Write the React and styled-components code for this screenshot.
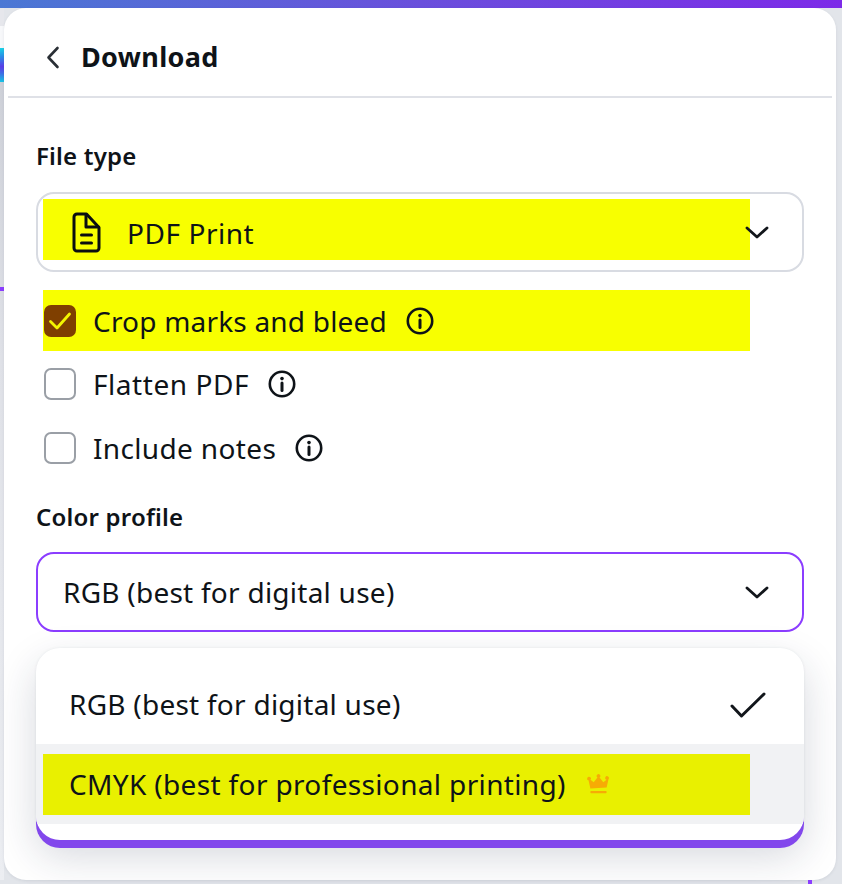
import React from "react";
import styled, { createGlobalStyle } from "styled-components";

const Global = createGlobalStyle`
  html, body { margin: 0; padding: 0; }
  body { background: #e2e5ea; font-family: "Noto Sans", "Open Sans", sans-serif; color: #0e1318; }
`;

const Page = styled.div`
  width: 842px;
  height: 884px;
  overflow: hidden;
  display: flex;
  flex-direction: column;
`;
const TopBar = styled.div`
  height: 8px;
  flex: none;
  background: linear-gradient(90deg, #4a78d4 0%, #6a4fdc 50%, #7d2ae8 100%);
`;
const Middle = styled.div`
  display: flex;
  height: 872px;
  flex: none;
`;
const Gutter = styled.div`
  width: 4px;
  flex: none;
  display: flex;
  flex-direction: column;
  background: linear-gradient(180deg, #c9ccd4 0%, #dfe1e7 40%, #eceef2 100%);
`;
const Sliver = styled.div`
  height: ${(p) => p.$h}px;
  background: ${(p) => p.$bg};
  flex: none;
`;
const Panel = styled.section`
  width: 832px;
  flex: none;
  background: #fff;
  border-radius: 22px;
  box-sizing: border-box;
  padding: 0 4px;
  box-shadow: 0 1px 3px rgba(60, 66, 87, 0.1);
`;
const Bottom = styled.div`
  height: 4px;
  flex: none;
  display: flex;
  justify-content: flex-end;
  padding-right: 30px;
`;
const Tick = styled.div`
  width: 4px;
  background: #8b3dff;
`;
const Header = styled.header`
  height: 90px;
  box-sizing: border-box;
  display: flex;
  align-items: center;
  padding: 10px 0 0 38px;
  gap: 21px;
  border-bottom: 2px solid #dfe1e7;
`;
const Title = styled.h1`
  margin: 0;
  font-size: 27px;
  line-height: 36px;
  font-weight: 700;
  letter-spacing: 0.35px;
`;
const Body = styled.div`
  padding: 0 28px;
`;
const Label = styled.div`
  font-size: 24px;
  line-height: 30px;
  font-weight: 600;
  letter-spacing: 0.2px;
  margin-top: ${(p) => p.$top}px;
  margin-bottom: ${(p) => p.$bottom}px;
`;
const SelectBox = styled.div`
  width: 768px;
  height: 80px;
  box-sizing: border-box;
  border: 2px solid ${(p) => (p.$active ? "#8b3dff" : "#d8dbe2")};
  border-radius: 18px;
  display: flex;
  align-items: center;
  padding: ${(p) => (p.$active ? "0 33px 0 25px" : "0 0 5px 5px")};
`;
const Highlight = styled.div`
  width: 707px;
  height: 61px;
  flex: none;
  box-sizing: border-box;
  display: flex;
  align-items: center;
  background: ${(p) => p.$bg || "#f8ff00"};
`;
const SelectValue = styled.span`
  font-size: 28px;
  line-height: 36px;
  letter-spacing: ${(p) => p.$spacing ?? 0.2}px;
  margin-top: ${(p) => p.$top || 0}px;
  flex: 1;
`;
const DocSlot = styled.span`
  display: flex;
  margin: 5px 26px 0 29px;
`;
const Chevron = styled.svg`
  width: 24px;
  height: 15px;
  flex: none;
  margin-left: ${(p) => p.$left}px;
  margin-top: ${(p) => p.$top}px;
`;
const CheckList = styled.div`
  margin: 18px 0 0;
  display: flex;
  flex-direction: column;
`;
const CheckRow = styled.div`
  height: 64px;
  margin-left: 7px;
  display: flex;
  align-items: center;
  &:first-child { height: 61px; margin-bottom: 1px; }
`;
const Box = styled.span`
  width: 32px;
  height: 32px;
  flex: none;
  box-sizing: border-box;
  border-radius: 7px;
  border: ${(p) => (p.$on ? "none" : "2px solid #9a9fa6")};
  background: ${(p) => (p.$on ? "#7f3f00" : "#fff")};
  display: flex;
  align-items: center;
  justify-content: center;
  margin-left: 1px;
`;
const CheckText = styled.span`
  font-size: 28px;
  line-height: 36px;
  letter-spacing: ${(p) => p.$spacing}px;
  margin-left: 17px;
`;
const Info = styled.svg`
  width: 28px;
  height: 28px;
  flex: none;
  margin-left: 19px;
`;
const Menu = styled.div`
  width: 768px;
  margin-top: 16px;
  padding-bottom: 16px;
  border-radius: 24px;
  background: #fff;
  overflow: hidden;
  box-shadow: 0 8px 0 #8247ec, 0 16px 40px rgba(30, 40, 70, 0.18), 0 0 3px rgba(30, 40, 70, 0.08);
`;
const MenuTop = styled.div`
  height: 96px;
  box-sizing: border-box;
  padding: 18px 38px 0 33px;
  display: flex;
  align-items: center;
  justify-content: space-between;
`;
const MenuHover = styled.div`
  height: 80px;
  background: #f1f2f4;
  padding-left: 7px;
  display: flex;
  align-items: center;
`;
const MenuText = styled.span`
  font-size: 28px;
  line-height: 36px;
  letter-spacing: ${(p) => p.$spacing ?? 0.2}px;
  margin-left: ${(p) => p.$left || 0}px;
  margin-top: ${(p) => p.$top || 0}px;
`;
const Crown = styled.svg`
  width: 23px;
  height: 22px;
  flex: none;
  margin-left: 21px;
`;

const ChevronIcon = ({ left, top }) => (
  <Chevron $left={left} $top={top} viewBox="0 0 24 15" fill="none" stroke="#12161b" strokeWidth="2.8" strokeLinecap="round" strokeLinejoin="round">
    <path d="M2 3l10 9 10-9" />
  </Chevron>
);

const InfoIcon = () => (
  <Info viewBox="0 0 28 28" fill="none">
    <circle cx="14" cy="14" r="12.2" stroke="#0e1318" strokeWidth="2.6" />
    <circle cx="14" cy="8.6" r="1.8" fill="#0e1318" />
    <path d="M14 13v7.5" stroke="#0e1318" strokeWidth="3" strokeLinecap="round" />
  </Info>
);

const Row = ({ label, on, spacing = 0.2 }) => (
  <>
    <Box $on={on}>
      {on && (
        <svg width="24" height="20" viewBox="0 0 24 20" fill="none" stroke="#f3f500" strokeWidth="2.8" strokeLinecap="round" strokeLinejoin="round">
          <path d="M2.5 10.5l6.5 6.5L21.5 3" />
        </svg>
      )}
    </Box>
    <CheckText $spacing={spacing}>{label}</CheckText>
    <InfoIcon />
  </>
);

export default function App() {
  return (
    <Page>
      <Global />
      <TopBar />
      <Middle>
        <Gutter>
          <Sliver $h={18} $bg="#e6e7ec" />
          <Sliver $h={22} $bg="#f7f8fa" />
          <Sliver $h={34} $bg="linear-gradient(180deg,#18d3e6 0%,#2b8fe8 25%,#5a3ee8 55%,#3f6fe6 75%,#16c6e6 100%)" />
          <Sliver $h={205} $bg="transparent" />
          <Sliver $h={4} $bg="#8b3dff" />
        </Gutter>
        <Panel>
          <Header>
            <svg width="14" height="23" viewBox="0 0 14 23" fill="none" stroke="#2a2f35" strokeWidth="2.6" strokeLinecap="round" strokeLinejoin="round">
              <path d="M11.5 2L2.5 11.5l9 9.5" />
            </svg>
            <Title>Download</Title>
          </Header>
          <Body>
            <Label $top={43} $bottom={21}>File type</Label>
            <SelectBox>
              <Highlight>
                <DocSlot>
                  <svg width="29" height="41" viewBox="0 0 29 41" fill="none" stroke="#0b0e10" strokeWidth="3" strokeLinejoin="round" strokeLinecap="round">
                    <path d="M5 2h9.5L27 15.5V36a3 3 0 0 1-3 3H5a3 3 0 0 1-3-3V5a3 3 0 0 1 3-3z" />
                    <path d="M14 2.5V15h12.5" />
                    <path d="M9.5 23h10M9.5 31h10" />
                  </svg>
                </DocSlot>
                <SelectValue $spacing={0.55} $top={6}>PDF Print</SelectValue>
              </Highlight>
              <ChevronIcon left={-5} top={5} />
            </SelectBox>
            <CheckList>
              <CheckRow>
                <Highlight>
                  <Row label="Crop marks and bleed" on />
                </Highlight>
              </CheckRow>
              <CheckRow><Row label="Flatten PDF" spacing={0.55} /></CheckRow>
              <CheckRow><Row label="Include notes" spacing={0.35} /></CheckRow>
            </CheckList>
            <Label $top={22} $bottom={20}>Color profile</Label>
            <SelectBox $active>
              <SelectValue $spacing={0.25}>RGB (best for digital use)</SelectValue>
              <ChevronIcon left={0} top={1} />
            </SelectBox>
            <Menu>
              <MenuTop>
                <MenuText $top={-3} $spacing={0.25}>RGB (best for digital use)</MenuText>
                <svg width="36" height="26" viewBox="0 0 36 26" fill="none" stroke="#12161b" strokeWidth="3" strokeLinecap="round" strokeLinejoin="round">
                  <path d="M2 14l9.5 10L34 2" />
                </svg>
              </MenuTop>
              <MenuHover>
                <Highlight $bg="#e9f000">
                  <MenuText $left={26} $spacing={0.35}>CMYK (best for professional printing)</MenuText>
                  <Crown viewBox="0 0 24 22">
                    <path fill="#f7ab05" d="M3.5 15.8L1.6 7.2a1.9 1.9 0 1 1 2-.6l3.4 2.6 3.9-5a1.9 1.9 0 1 1 2.2 0l3.9 5 3.4-2.6a1.9 1.9 0 1 1 2-.6l-1.9 8.6z" />
                    <rect x="3.5" y="18.2" width="17" height="2.4" rx="1" fill="#f7ab05" />
                  </Crown>
                </Highlight>
              </MenuHover>
            </Menu>
          </Body>
        </Panel>
      </Middle>
      <Bottom><Tick /></Bottom>
    </Page>
  );
}
